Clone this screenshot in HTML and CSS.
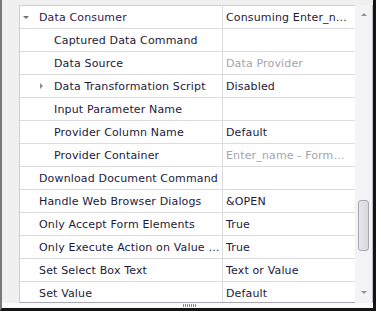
FILE: index.html
```html
<!DOCTYPE html>
<html>
<head>
<meta charset="utf-8">
<link rel="stylesheet" href="styles.css">
</head>
<body>
<div class="window">
  <div class="top-strip"></div>
  <div class="main">
    <div class="grid">
      <div class="row">
        <div class="name cat"><span class="tri-down"></span><span class="label">Data Consumer</span></div>
        <div class="value">Consuming Enter_name - Form</div>
      </div>
      <div class="row">
        <div class="name child"><span class="label">Captured Data Command</span></div>
        <div class="value"></div>
      </div>
      <div class="row">
        <div class="name child"><span class="label">Data Source</span></div>
        <div class="value muted">Data Provider</div>
      </div>
      <div class="row">
        <div class="name child"><span class="tri-right"></span><span class="label">Data Transformation Script</span></div>
        <div class="value">Disabled</div>
      </div>
      <div class="row">
        <div class="name child"><span class="label">Input Parameter Name</span></div>
        <div class="value"></div>
      </div>
      <div class="row">
        <div class="name child"><span class="label">Provider Column Name</span></div>
        <div class="value">Default</div>
      </div>
      <div class="row">
        <div class="name child"><span class="label">Provider Container</span></div>
        <div class="value muted">Enter_name - Form Container</div>
      </div>
      <div class="row">
        <div class="name top"><span class="label">Download Document Command</span></div>
        <div class="value"></div>
      </div>
      <div class="row">
        <div class="name top"><span class="label">Handle Web Browser Dialogs</span></div>
        <div class="value">&amp;OPEN</div>
      </div>
      <div class="row">
        <div class="name top"><span class="label">Only Accept Form Elements</span></div>
        <div class="value">True</div>
      </div>
      <div class="row">
        <div class="name top"><span class="label">Only Execute Action on Value Change</span></div>
        <div class="value">True</div>
      </div>
      <div class="row">
        <div class="name top"><span class="label">Set Select Box Text</span></div>
        <div class="value">Text or Value</div>
      </div>
      <div class="row">
        <div class="name top"><span class="label">Set Value</span></div>
        <div class="value">Default</div>
      </div>
    </div>
    <div class="scrollbar">
      <span class="arrow-up"></span>
      <div class="track"><div class="thumb"></div></div>
      <span class="arrow-down"></span>
    </div>
  </div>
  <div class="splitter"><span class="grip"></span></div>
</div>
</body>
</html>
```

FILE: styles.css
```css
html, body {
  margin: 0;
  padding: 0;
  background: #ffffff;
}

body {
  font-family: "DejaVu Sans", Verdana, sans-serif;
  font-size: 11px;
  letter-spacing: 0.15px;
}

.window {
  width: 376px;
  height: 311px;
  box-sizing: border-box;
  border-left: 2px solid #7a7a7a;
  border-right: 3px solid #151515;
  border-bottom: 3px solid #151515;
  background: #f0f0f0;
  display: flex;
  flex-direction: column;
}

.top-strip {
  height: 5px;
  flex: none;
}

.main {
  display: flex;
  height: 298px;
  flex: none;
  padding-left: 17px;
}

.grid {
  width: 336px;
  box-sizing: border-box;
  border-top: 1px solid #d0d0d4;
  border-left: 1px solid #d0d0d4;
  border-bottom: 1px solid #a8a8b0;
  background: #ffffff;
  overflow: hidden;
  flex: none;
}

.row {
  display: flex;
  height: 23px;
  box-sizing: border-box;
  border-bottom: 1px solid #dcdce0;
}

.name {
  width: 203px;
  box-sizing: border-box;
  border-right: 1px solid #dcdce0;
  padding-top: 1px;
  padding-right: 2px;
  display: flex;
  align-items: center;
  color: #1c1a3c;
  white-space: nowrap;
  overflow: hidden;
  flex: none;
  position: relative;
}

.name .label {
  overflow: hidden;
  text-overflow: ellipsis;
  white-space: nowrap;
  display: block;
}

.name.cat {
  padding-left: 19px;
  color: #33204e;
}

.name.child {
  padding-left: 34px;
}

.name.top {
  padding-left: 19px;
}

.tri-down {
  position: absolute;
  left: 3px;
  top: 10px;
  width: 0;
  height: 0;
  border-left: 3px solid transparent;
  border-right: 3px solid transparent;
  border-top: 3px solid #707078;
}

.tri-right {
  position: absolute;
  left: 20px;
  top: 8px;
  width: 0;
  height: 0;
  border-top: 3px solid transparent;
  border-bottom: 3px solid transparent;
  border-left: 3px solid #8a8a90;
}

.value {
  flex: 1;
  min-width: 0;
  padding-left: 3px;
  padding-right: 7px;
  padding-top: 1px;
  color: #1c1a3c;
  white-space: nowrap;
  overflow: hidden;
  text-overflow: ellipsis;
  display: block;
  line-height: 21px;
}

.muted {
  color: #a4a4ac;
}

.scrollbar {
  width: 17px;
  box-sizing: border-box;
  background: #f3f3f5;
  border-right: 1px solid #bcbcc0;
  display: flex;
  flex-direction: column;
  align-items: center;
  flex: 1;
}

.arrow-up {
  margin-top: 8px;
  width: 0;
  height: 0;
  border-left: 3px solid transparent;
  border-right: 3px solid transparent;
  border-bottom: 3px solid #909098;
}

.track {
  flex: 1;
  width: 100%;
  display: flex;
  justify-content: center;
  padding-top: 184px;
  box-sizing: border-box;
}

.thumb {
  width: 11px;
  height: 51px;
  box-sizing: border-box;
  border: 1px solid #a8a8b0;
  border-radius: 3px;
  background: linear-gradient(to right, #e6e6ea, #dadade);
}

.arrow-down {
  margin-bottom: 9px;
  width: 0;
  height: 0;
  border-left: 3px solid transparent;
  border-right: 3px solid transparent;
  border-top: 3px solid #909098;
}

.splitter {
  flex: 1;
  background: #fbfbfb;
  display: flex;
  justify-content: center;
  align-items: center;
}

.grip {
  width: 14px;
  height: 3px;
  margin-left: 4px;
  background: repeating-linear-gradient(to right, #8a8a90 0 1px, transparent 1px 2px);
}
```
